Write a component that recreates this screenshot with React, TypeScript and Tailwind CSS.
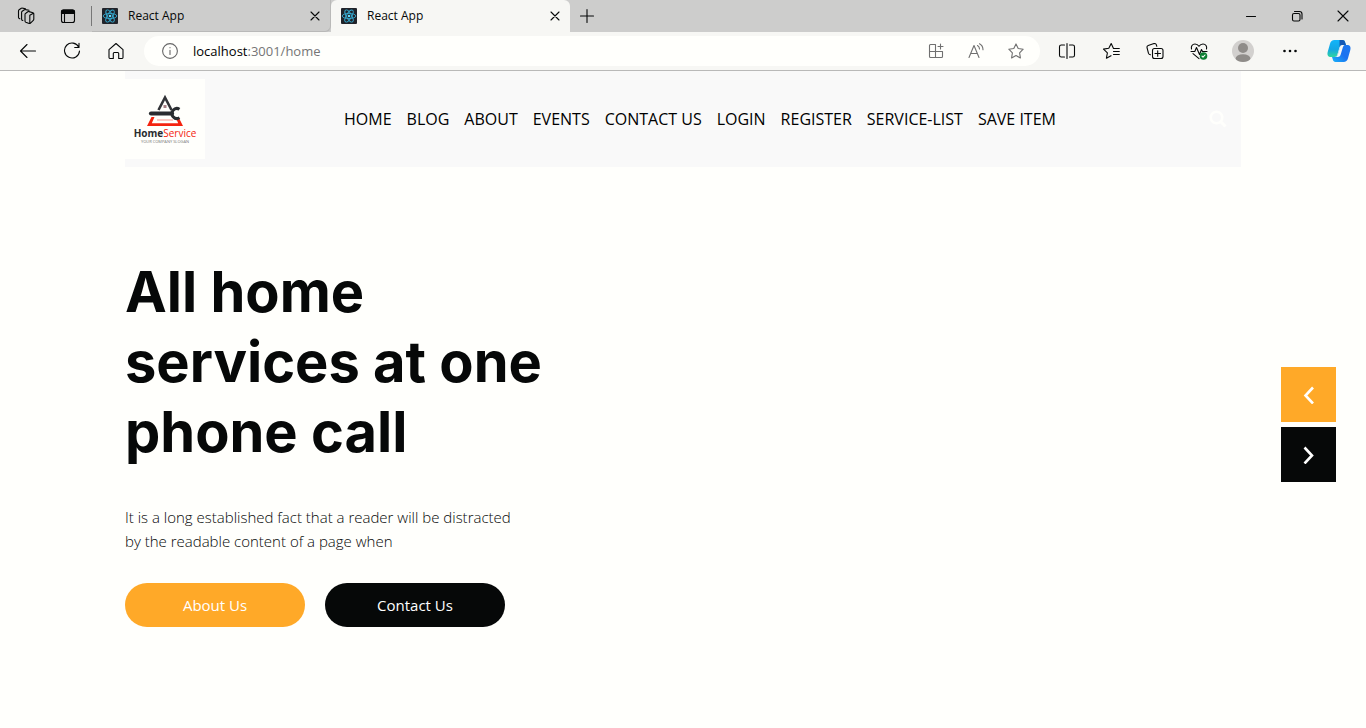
import type { ReactNode } from 'react'

const NAV_LINKS = [
  'HOME',
  'BLOG',
  'ABOUT',
  'EVENTS',
  'CONTACT US',
  'LOGIN',
  'REGISTER',
  'SERVICE-LIST',
  'SAVE ITEM',
]

interface IconProps {
  size?: number
  className?: string
  children: ReactNode
}

function Icon({ size = 20, className = '', children }: IconProps) {
  return (
    <svg
      width={size}
      height={size}
      viewBox={`0 0 ${size} ${size}`}
      fill="none"
      stroke="currentColor"
      strokeWidth="1.1"
      strokeLinecap="round"
      strokeLinejoin="round"
      className={`shrink-0 ${className}`}
      aria-hidden="true"
    >
      {children}
    </svg>
  )
}

function ReactFavicon() {
  return (
    <svg width="16" height="16" viewBox="0 0 16 16" className="shrink-0" aria-hidden="true">
      <rect width="16" height="16" rx="1" fill="#20232a" />
      <g fill="none" stroke="#35a9cf" strokeWidth="0.9">
        <ellipse cx="8" cy="8" rx="6.8" ry="2.6" />
        <ellipse cx="8" cy="8" rx="6.8" ry="2.6" transform="rotate(60 8 8)" />
        <ellipse cx="8" cy="8" rx="6.8" ry="2.6" transform="rotate(120 8 8)" />
      </g>
      <circle cx="8" cy="8" r="1.3" fill="#61dafb" />
    </svg>
  )
}

function BrowserTab({ active = false }: { active?: boolean }) {
  return (
    <div
      className={`flex h-8 w-[239px] shrink-0 items-center pr-[7px] pl-[10px] ${
        active ? 'rounded-t-md bg-[#f7f7f4]' : 'rounded-br-md border-r border-b border-[#b9b9b8]'
      }`}
    >
      <ReactFavicon />
      <span className="ml-[10px] flex-1 text-[12px]">React App</span>
      <button type="button" aria-label="Close tab" className="flex h-4 w-4 items-center justify-center">
        <Icon size={10}>
          <path d="M1 1l8 8M9 1L1 9" />
        </Icon>
      </button>
    </div>
  )
}

function TabStrip() {
  return (
    <div className="flex h-8 items-center bg-[#cdcdcc]">
      <button type="button" aria-label="Workspaces" className="ml-4 flex w-5 justify-center">
        <Icon size={18}>
          <path d="M8 7.500c0-.6.300-1 .8-1.300l2-1.400c.4-.2.800-.3 1.200-.2l4 1.100c.5.100.8.500.8 1v5.600c0 .4-.2.800-.5 1.100l-2.800 2.700c-.4.400-.8.500-1.300.3l-3.400-1.200c-.5-.2-.8-.6-.8-1.200zM12.800 8.200v7.600M12.800 8.200l3.600-2" />
          <path d="M5.800 13.500l-.6-.3c-.4-.2-.6-.5-.6-1V5.500c0-.5.2-.9.600-1.200l2.200-1.500c.4-.2.800-.3 1.200-.2l3.400.7" />
          <path d="M2.800 11.800l-.6-.3c-.4-.2-.7-.5-.7-1V4c0-.5.2-.9.600-1.200l2.200-1.500c.4-.2.8-.3 1.200-.2l3 .6" />
        </Icon>
      </button>
      <button type="button" aria-label="Tab actions" className="ml-[22px] flex w-5 justify-center">
        <Icon size={16}>
          <rect x="1.5" y="2" width="13" height="12.5" rx="2" />
          <path d="M1.5 4V3.5C1.5 2.5 2.4 2 3.5 2h9c1.1 0 2 .5 2 1.500V5.500h-13z" fill="currentColor" />
          <path d="M4.500 5.500v9" />
        </Icon>
      </button>
      <span className="ml-[13px] h-5 w-px bg-[#777]" />
      <BrowserTab />
      <BrowserTab active />
      <button type="button" aria-label="New tab" className="ml-[9px]">
        <Icon size={16}>
          <path d="M8 1.500v13M1.500 8h13" />
        </Icon>
      </button>
      <div className="ml-auto flex items-center gap-8 pr-4">
        <button type="button" aria-label="Minimize" className="flex w-[14px] justify-center">
          <Icon size={12}>
            <path d="M1.500 6.500h9" />
          </Icon>
        </button>
        <button type="button" aria-label="Restore" className="flex w-[14px] justify-center">
          <Icon size={12}>
            <rect x="1.500" y="3.500" width="7.500" height="7.500" rx="1.500" />
            <path d="M3.500 1.500h5c1.400 0 2.500 1 2.500 2.500v5" />
          </Icon>
        </button>
        <button type="button" aria-label="Close" className="flex w-[14px] justify-center">
          <Icon size={12}>
            <path d="M1 1l10 10M11 1L1 11" />
          </Icon>
        </button>
      </div>
    </div>
  )
}

function CopilotIcon() {
  return (
    <svg width="24" height="24" viewBox="0 0 24 24" className="shrink-0" aria-hidden="true">
      <defs>
        <linearGradient id="copilot-left" x1="0" y1="0" x2="0" y2="1">
          <stop offset="0" stopColor="#12b5fa" />
          <stop offset="0.55" stopColor="#14a6e4" />
          <stop offset="1" stopColor="#2fd6a0" />
        </linearGradient>
        <linearGradient id="copilot-right" x1="1" y1="0" x2="0" y2="1">
          <stop offset="0" stopColor="#1e78f0" />
          <stop offset="0.5" stopColor="#1b72f0" />
          <stop offset="1" stopColor="#19b4fa" />
        </linearGradient>
      </defs>
      <path d="M7.500 1h8c1.500 0 2.200.9 2.600 2.200L19 6h-3.500c-1.900 0-2.600 1-3.200 3l-2 6.800C9.700 17.500 9 18 7.500 18H3.700C.8 18 0 15.700.7 13L3 4.800C3.800 2.200 5 1 7.500 1z" fill="url(#copilot-left)" />
      <path d="M12.500 1h3c1.500 0 2.200.9 2.600 2.200L19 6h-3.500c-1.500 0-2.300.7-2.900 2z" fill="#1559b5" />
      <path d="M16.500 23h-8c-1.500 0-2.200-.9-2.600-2.200L5 18h2.800c1.900 0 2.600-1 3.200-3l2.200-6.800C13.800 6.500 14.500 6 16 6h4.300c2.900 0 3.700 2.300 3 5L21 19.200c-.8 2.600-2 3.800-4.500 3.800z" fill="url(#copilot-right)" />
      <path d="M13.500 6.800c.5-.6 1.200-.8 2.500-.8h1.500c-.9.400-1.300 1.200-1.700 2.600l-2.200 7.200c-.6 1.700-1.300 2.200-2.900 2.200H8.500c1.300-.3 1.900-1.200 2.400-2.800z" fill="#f7f7f4" />
    </svg>
  )
}

function AddressBar() {
  return (
    <div className="flex h-[30px] flex-1 items-center rounded-full bg-[#fffffc] pr-4 pl-[18px]">
      <Icon size={16} className="text-[#666]">
        <circle cx="8" cy="8" r="7.400" />
        <path d="M8 7.200v4.300M8 4.600v.2" />
      </Icon>
      <p className="ml-[15px] flex-1 pt-px text-[13px] text-[#757575]">
        <span className="text-black">localhost</span>:3001/home
      </p>
      <div className="flex items-center gap-6 text-[#707070]">
        <button type="button" aria-label="App available">
          <Icon size={16}>
            <path d="M7.500 1.500h-5c-.6 0-1 .4-1 1v11c0 .6.4 1 1 1h11c.6 0 1-.4 1-1v-5h-13M7.500 1.500v13M12.500 1v5M10 3.500h5" />
          </Icon>
        </button>
        <button type="button" aria-label="Read aloud">
          <Icon size={16}>
            <path d="M1 14.500L6 2.500l5 12M2.800 10.500h6.400M9.500 2.500c1.300.8 2 2 2 3.500M11.500.8C13.800 2 15 4 15 6.800" />
          </Icon>
        </button>
        <button type="button" aria-label="Add to favorites">
          <Icon size={16}>
            <path d="M8 .9l2.200 4.600 5 .7-3.600 3.600.8 5.100L8 12.500l-4.400 2.400.8-5.100L.8 6.200l5-.7z" />
          </Icon>
        </button>
      </div>
    </div>
  )
}

function Toolbar() {
  return (
    <div className="flex h-[39px] items-center border-b border-[#b9b9b8] bg-[#f7f7f4] pr-[15px] pl-[19px]">
      <div className="mr-[19px] flex items-center gap-[26px]">
        <button type="button" aria-label="Back">
          <Icon size={18}>
            <path d="M16.500 9h-15M8 2.500L1.500 9 8 15.500" />
          </Icon>
        </button>
        <button type="button" aria-label="Refresh">
          <Icon size={18}>
            <path d="M15.800 5.300A7.500 7.500 0 1 0 16.500 9M16 1.200v4.300h-4.300" />
          </Icon>
        </button>
        <button type="button" aria-label="Home">
          <Icon size={18}>
            <path d="M2 7.600L9 1.500l7 6.100v8c0 .5-.3.900-.9.900h-3.400v-5c0-.6-.3-1-.9-1H7.200c-.6 0-.9.400-.9 1v5H2.900c-.6 0-.9-.4-.9-.9z" />
          </Icon>
        </button>
      </div>
      <AddressBar />
      <div className="ml-[17px] flex items-center gap-6">
        <button type="button" aria-label="Split screen">
          <Icon size={20}>
            <path d="M7.500 4H4.300C3.300 4 2.500 4.800 2.500 5.800v8.400c0 1 .8 1.800 1.800 1.800h3.200M12.500 4h3.200c1 0 1.800.8 1.800 1.800v8.400c0 1-.8 1.800-1.800 1.800h-3.200M10 2.500v15" />
          </Icon>
        </button>
        <button type="button" aria-label="Favorites">
          <Icon size={20}>
            <path d="M18.300 7.500h-5.800L10.200 2.600 7.800 7.300l-5.300.8 3.900 3.800-1 5.300 4.600-2.500M12.500 10.500h5.800M12.500 13.500h5.800" />
          </Icon>
        </button>
        <button type="button" aria-label="Collections">
          <Icon size={20}>
            <rect x="7.500" y="7.500" width="10.500" height="10" rx="2" />
            <path d="M12.700 9.700v5.600M10 12.500h5.500M5.500 13.800c-1 0-1.600-.4-2-1.400L2 6.500c-.2-1 .3-1.700 1.200-2L9 2.600c1-.3 2 .1 2.300 1l.5 1.700" />
          </Icon>
        </button>
        <button type="button" aria-label="Browser essentials">
          <Icon size={20}>
            <path d="M2.500 8C1.800 5.500 3.300 3 6 3c1.800 0 3 .8 4 2.300C11 3.800 12.200 3 14 3c2.700 0 4.200 2.500 3.500 5M2 10.500h3.800l1.700-4 3 7 2-5 1 2H18M4 12.700l6 5" />
            <circle cx="14.500" cy="15" r="3.800" fill="#0d7f32" stroke="none" />
            <path d="M13 15.200l1 1 2-2.200" stroke="#fff" />
          </Icon>
        </button>
        <button type="button" aria-label="Profile" className="-mx-px">
          <svg width="22" height="22" viewBox="0 0 22 22" aria-hidden="true">
            <clipPath id="avatar">
              <circle cx="11" cy="11" r="11" />
            </clipPath>
            <g clipPath="url(#avatar)">
              <rect width="22" height="22" fill="#d2d0ce" />
              <circle cx="11" cy="8" r="5" fill="#8f8c89" />
              <ellipse cx="11" cy="19" rx="7.500" ry="4.800" fill="#8f8c89" />
            </g>
          </svg>
        </button>
        <button type="button" aria-label="Settings and more" className="mx-[3px]">
          <Icon size={20}>
            <g fill="currentColor" stroke="none">
              <circle cx="4.500" cy="10" r="1.300" />
              <circle cx="10" cy="10" r="1.300" />
              <circle cx="15.500" cy="10" r="1.300" />
            </g>
          </Icon>
        </button>
        <button type="button" aria-label="Copilot">
          <CopilotIcon />
        </button>
      </div>
    </div>
  )
}

function Logo() {
  return (
    <a href="#home" className="flex h-20 w-20 shrink-0 flex-col items-center bg-[#fffffc] pt-[14px]">
      <svg width="40" height="34" viewBox="0 0 40 34" aria-hidden="true">
        <path d="M13.500 17L20 4.500 26.500 17" fill="none" stroke="#323438" strokeWidth="2.600" />
        <path d="M6.500 24h3l-2.700 6.200h26.400L30.500 24h3L38 33H2z" fill="#f4230f" />
        <path d="M12 27h16" stroke="#f6a59d" strokeWidth="1.200" />
        <rect x="18.500" y="12" width="3" height="3" fill="#a58085" />
        {/* Wrench, open jaw to the right */}
        <path d="M6 20.500h21" stroke="#292c30" strokeWidth="4.200" strokeLinecap="round" />
        <path d="M34.500 16.200a5 5 0 1 0 0 8.600" fill="none" stroke="#292c30" strokeWidth="3" />
      </svg>
      <span className="text-[10px] leading-[12px] font-bold text-[#292c30]">
        Home<span className="font-normal text-[#f4230f]">Service</span>
      </span>
      <span className="text-[4px] leading-[5px] whitespace-nowrap text-[#777]">YOUR COMPANY SLOGAN</span>
    </a>
  )
}

function SiteHeader() {
  return (
    <header className="mx-auto flex w-full max-w-[1116px] items-center bg-[#f9f9f9] py-2">
      <Logo />
      <nav className="flex flex-1 justify-center gap-[15px] text-[16px] whitespace-nowrap text-black">
        {NAV_LINKS.map((label) => (
          <a key={label} href={`#${label.toLowerCase().replace(' ', '-')}`}>
            {label}
          </a>
        ))}
      </nav>
      <button type="button" aria-label="Search" className="flex w-[46px] shrink-0 justify-center text-[#fffffc]">
        <svg width="18" height="18" viewBox="0 0 18 18" fill="none" stroke="currentColor" aria-hidden="true">
          <circle cx="7.500" cy="7.500" r="5.800" strokeWidth="2.600" />
          <path d="M12 12l4.500 4.500" strokeWidth="3" />
        </svg>
      </button>
    </header>
  )
}

function Hero() {
  return (
    <main className="relative flex-1 pb-10">
      <section className="mx-auto w-full max-w-[1116px] pt-[90px]">
        <h1 className="w-[440px] font-[Inter,sans-serif] text-[56px] leading-[70px] font-bold">
          All home services at one phone call
        </h1>
        <p className="mt-[38px] w-[400px] text-[15px] leading-6 font-light">
          It is a long established fact that a reader will be distracted by the readable content of a page when
        </p>
        <div className="mt-[30px] flex gap-5 text-[15px] text-white">
          <a href="#about" className="flex h-11 w-[180px] items-center justify-center rounded-full bg-[#ffa928]">
            About Us
          </a>
          <a href="#contact" className="flex h-11 w-[180px] items-center justify-center rounded-full bg-[#060808]">
            Contact Us
          </a>
        </div>
      </section>

      {/* Carousel controls */}
      <div className="absolute top-[200px] right-[30px] flex flex-col gap-[5px] text-white">
        <button type="button" aria-label="Previous" className="flex h-[55px] w-[55px] items-center justify-center bg-[#ffa928]">
          <svg width="18" height="18" viewBox="0 0 18 18" fill="none" stroke="currentColor" strokeWidth="2.600" aria-hidden="true">
            <path d="M13 1.500L5.500 9.500l7.500 8" />
          </svg>
        </button>
        <button type="button" aria-label="Next" className="flex h-[55px] w-[55px] items-center justify-center bg-[#060808]">
          <svg width="18" height="18" viewBox="0 0 18 18" fill="none" stroke="currentColor" strokeWidth="2.600" aria-hidden="true">
            <path d="M4.500 1.500l7.500 8-7.500 8" />
          </svg>
        </button>
      </div>
    </main>
  )
}

export default function App() {
  return (
    <div className="flex min-h-screen flex-col bg-[#fffffc] font-['Open_Sans','Noto_Sans',sans-serif] text-[#060808]">
      <div>
        <TabStrip />
        <Toolbar />
      </div>
      <SiteHeader />
      <Hero />
    </div>
  )
}
